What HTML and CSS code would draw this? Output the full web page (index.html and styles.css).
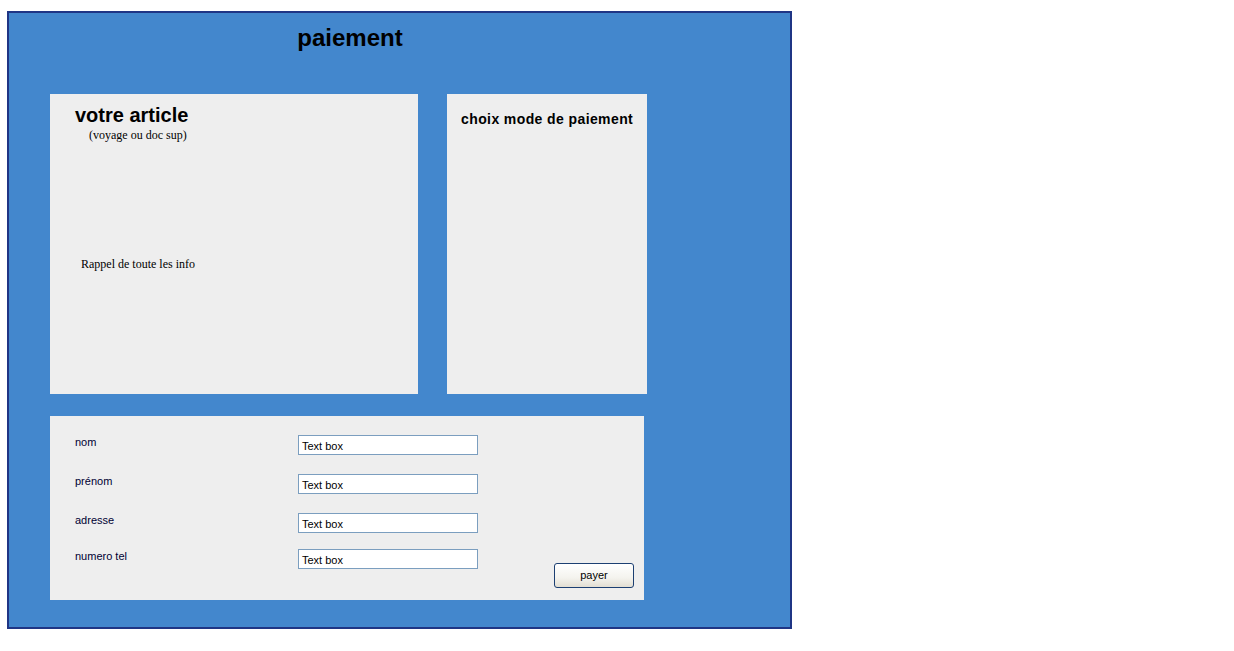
FILE: index.html
```html
<!DOCTYPE html>
<html lang="fr">
<head>
<meta charset="utf-8">
<title>paiement</title>
<link rel="stylesheet" href="styles.css">
</head>
<body>
<div class="frame">
  <div class="header">paiement</div>
  <div class="panels">
    <div class="panel article">
      <div class="article-title">votre article</div>
      <div class="article-sub">(voyage ou doc sup)</div>
      <div class="article-info">Rappel de toute les info</div>
    </div>
    <div class="panel mode">
      <div class="mode-title">choix mode de paiement</div>
    </div>
  </div>
  <div class="form">
    <div class="row">
      <div class="label">nom</div>
      <div class="input">Text box</div>
    </div>
    <div class="row">
      <div class="label">prénom</div>
      <div class="input">Text box</div>
    </div>
    <div class="row">
      <div class="label">adresse</div>
      <div class="input">Text box</div>
    </div>
    <div class="row row-last">
      <div class="label">numero tel</div>
      <div class="input">Text box</div>
      <div class="button">payer</div>
    </div>
  </div>
</div>
</body>
</html>
```
FILE: styles.css
```css
html, body {
  margin: 0;
  padding: 0;
  background: #ffffff;
}

.frame {
  margin: 11px 0 0 7px;
  width: 781px;
  height: 614px;
  border: 2px solid #1f3585;
  background: #4387cd;
  font-family: "Liberation Sans", Arial, sans-serif;
  color: #000;
}

.header {
  width: 600px;
  height: 70px;
  margin-left: 41px;
  padding-top: 11px;
  text-align: center;
  font-size: 24px;
  font-weight: bold;
  line-height: 28px;
}

.panels {
  display: flex;
  gap: 29px;
  margin-left: 41px;
}

.panel {
  background: #eeeeee;
  height: 300px;
  box-sizing: border-box;
}

.article {
  width: 368px;
  padding: 10px 0 0 25px;
}

.article-title {
  font-size: 20px;
  font-weight: bold;
  line-height: 23px;
}

.article-sub {
  font-family: "Liberation Serif", "Times New Roman", serif;
  font-size: 12px;
  line-height: 14px;
  margin: 1px 0 0 14px;
}

.article-info {
  font-family: "Liberation Serif", "Times New Roman", serif;
  font-size: 12px;
  line-height: 14px;
  margin: 115px 0 0 6px;
}

.mode {
  width: 200px;
  padding: 17px 0 0 14px;
}

.mode-title {
  font-size: 14px;
  font-weight: bold;
  line-height: 16px;
  letter-spacing: 0.4px;
}

.form {
  margin: 22px 0 0 41px;
  width: 594px;
  height: 184px;
  box-sizing: border-box;
  background: #eeeeee;
  padding: 19px 10px 0 25px;
  font-size: 11px;
  color: #000033;
}

.row {
  display: flex;
  align-items: flex-start;
  margin-bottom: 19px;
}

.row:nth-child(3) {
  margin-bottom: 16px;
}

.row-last {
  margin-bottom: 0;
}

.label {
  width: 223px;
  padding-top: 1px;
  line-height: 13px;
}

.input {
  width: 180px;
  height: 20px;
  box-sizing: border-box;
  border: 1px solid #7b9ebf;
  background: #ffffff;
  padding: 3px 0 0 3px;
  line-height: 14px;
  color: #000;
}

.button {
  margin-left: auto;
  margin-top: 14px;
  width: 80px;
  height: 25px;
  box-sizing: border-box;
  border: 1px solid #1c3f72;
  border-radius: 3px;
  background: linear-gradient(#ffffff, #f4f3ee 60%, #e2ded2);
  text-align: center;
  line-height: 23px;
  color: #000;
}
```
